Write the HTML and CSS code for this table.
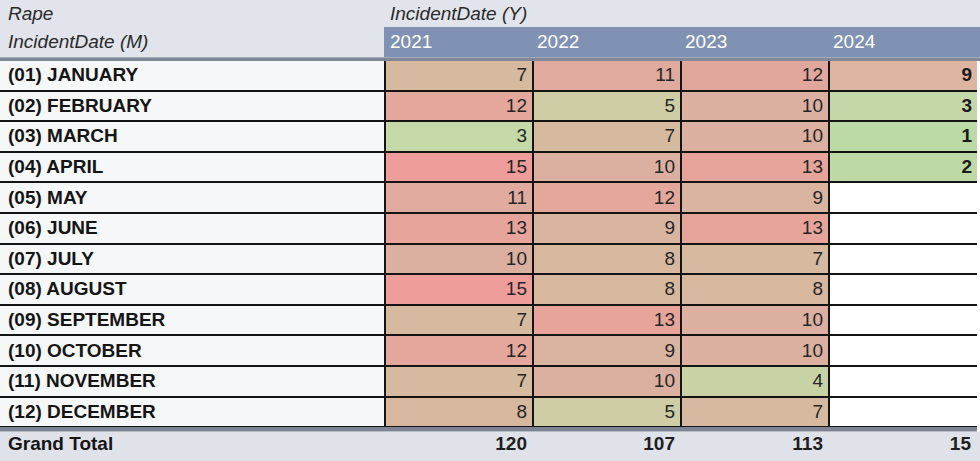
FILE: index.html
```html
<!DOCTYPE html>
<html>
<head>
<meta charset="utf-8">
<link rel="stylesheet" href="styles.css">
</head>
<body>
<div class="sheet">
  <div class="hdr hdr-top">
    <div class="hcell label-col"><i>Rape</i></div>
    <div class="hcell span4"><i>IncidentDate (Y)</i></div>
  </div>
  <div class="hdr hdr-years">
    <div class="hcell label-col"><i>IncidentDate (M)</i></div>
    <div class="year">2021</div>
    <div class="year">2022</div>
    <div class="year">2023</div>
    <div class="year last">2024</div>
  </div>
  <div class="sep"></div>
  <div class="body">
    <div class="row"><div class="lbl">(01) JANUARY</div><div class="c" style="background:#d5ba9f">7</div><div class="c" style="background:#e0aa9e">11</div><div class="c" style="background:#e2a79c">12</div><div class="c b last" style="background:#dcb4a0">9</div></div>
    <div class="row"><div class="lbl">(02) FEBRUARY</div><div class="c" style="background:#e3a79c">12</div><div class="c" style="background:#cecda5">5</div><div class="c" style="background:#dcb0a0">10</div><div class="c b last" style="background:#c3d7a8">3</div></div>
    <div class="row"><div class="lbl">(03) MARCH</div><div class="c" style="background:#c4d8a8">3</div><div class="c" style="background:#d5ba9f">7</div><div class="c" style="background:#dcb0a0">10</div><div class="c b last" style="background:#bcdaa6">1</div></div>
    <div class="row"><div class="lbl">(04) APRIL</div><div class="c" style="background:#ee9d9a">15</div><div class="c" style="background:#dcb0a0">10</div><div class="c" style="background:#e6a49b">13</div><div class="c b last" style="background:#bfd9a6">2</div></div>
    <div class="row"><div class="lbl">(05) MAY</div><div class="c" style="background:#e0aa9e">11</div><div class="c" style="background:#e3a79c">12</div><div class="c" style="background:#d9b4a0">9</div><div class="c last empty"></div></div>
    <div class="row"><div class="lbl">(06) JUNE</div><div class="c" style="background:#e6a49b">13</div><div class="c" style="background:#d9b4a0">9</div><div class="c" style="background:#e6a49b">13</div><div class="c last empty"></div></div>
    <div class="row"><div class="lbl">(07) JULY</div><div class="c" style="background:#dcb0a0">10</div><div class="c" style="background:#d7b89f">8</div><div class="c" style="background:#d5ba9f">7</div><div class="c last empty"></div></div>
    <div class="row"><div class="lbl">(08) AUGUST</div><div class="c" style="background:#ee9d9a">15</div><div class="c" style="background:#d7b89f">8</div><div class="c" style="background:#d7b89f">8</div><div class="c last empty"></div></div>
    <div class="row"><div class="lbl">(09) SEPTEMBER</div><div class="c" style="background:#d5ba9f">7</div><div class="c" style="background:#e6a49b">13</div><div class="c" style="background:#dcb0a0">10</div><div class="c last empty"></div></div>
    <div class="row"><div class="lbl">(10) OCTOBER</div><div class="c" style="background:#e3a79c">12</div><div class="c" style="background:#d9b4a0">9</div><div class="c" style="background:#dcb0a0">10</div><div class="c last empty"></div></div>
    <div class="row"><div class="lbl">(11) NOVEMBER</div><div class="c" style="background:#d5ba9f">7</div><div class="c" style="background:#dcb0a0">10</div><div class="c" style="background:#c8d3a5">4</div><div class="c last empty"></div></div>
    <div class="row final"><div class="lbl">(12) DECEMBER</div><div class="c" style="background:#d7b89f">8</div><div class="c" style="background:#cecda5">5</div><div class="c" style="background:#d5ba9f">7</div><div class="c last empty"></div></div>
  </div>
  <div class="sep2"></div>
  <div class="total">
    <div class="lbl tl">Grand Total</div>
    <div class="t">120</div>
    <div class="t">107</div>
    <div class="t">113</div>
    <div class="t last">15</div>
  </div>
</div>
</body>
</html>
```

FILE: styles.css
```css
html, body {
  margin: 0;
  padding: 0;
  background: #ffffff;
}
body {
  font-family: "Liberation Sans", Arial, sans-serif;
  color: #1e1e1e;
  width: 980px;
  height: 461px;
  overflow: hidden;
}
.sheet {
  width: 980px;
}
.hdr {
  display: grid;
  grid-template-columns: 384px 148px 148px 148px 152px;
  background: #e1e4eb;
}
.hdr-top {
  height: 27px;
}
.hdr-years {
  height: 30px;
}
.hcell {
  display: flex;
  align-items: center;
  padding-left: 8px;
  font-size: 19px;
  color: #2a2a2a;
}
.hdr-top .hcell {
  padding-top: 1px;
}
.span4 {
  grid-column: 2 / 6;
  padding-left: 6px;
}
.year {
  background: #7f92b3;
  color: #ffffff;
  font-size: 19px;
  display: flex;
  align-items: center;
  padding-left: 6px;
}
.year + .year {
  padding-left: 5px;
}
.sep {
  height: 4px;
  background: #80889a;
  border-top: 1px solid #a2a9b8;
  box-sizing: border-box;
}
.body {
  display: flex;
  flex-direction: column;
}
.row {
  display: grid;
  grid-template-columns: 384px 148px 148px 148px 149px;
  height: 30.6px;
  box-sizing: border-box;
  border-bottom: 2px solid #141414;
  width: 977px;
}
.row.final {
  height: 29px;
  border-bottom: 1px solid #141414;
}
.lbl {
  background: #f6f7f9;
  font-weight: bold;
  font-size: 19px;
  display: flex;
  align-items: center;
  padding-left: 8px;
  color: #151515;
}
.c {
  border-left: 2px solid #141414;
  display: flex;
  align-items: center;
  justify-content: flex-end;
  padding-right: 5px;
  font-size: 19px;
  color: #262626;
}
.c.b {
  font-weight: bold;
  color: #1a1a1a;
}
.c.empty {
  background: #ffffff;
}
.sep2 {
  height: 5px;
  box-sizing: border-box;
  background: #7e8493;
  width: 977px;
  border-bottom: 1px solid #b9bdc7;
}
.total {
  display: grid;
  grid-template-columns: 384px 148px 148px 148px 149px;
  height: 30px;
  box-sizing: border-box;
  padding-bottom: 6px;
  background: #dfe2e9;
  width: 980px;
}
.total .lbl {
  background: transparent;
}
.t {
  display: flex;
  align-items: center;
  justify-content: flex-end;
  padding-right: 5px;
  font-weight: bold;
  font-size: 19px;
  color: #1e1e1e;
}
.t.last {
  padding-right: 6px;
}
```
